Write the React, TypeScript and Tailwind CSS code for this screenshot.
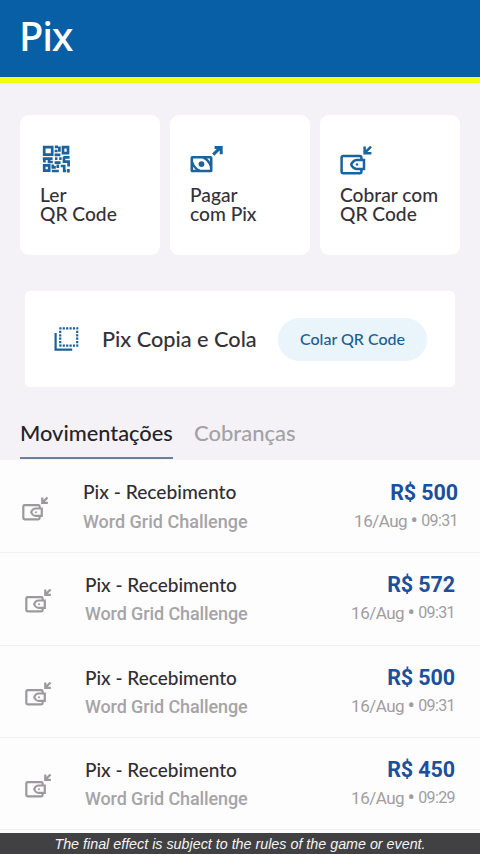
import clsx from "clsx";

type Movement = {
  id: number;
  amount: string;
  date: string;
  time: string;
};

const movements: Movement[] = [
  { id: 1, amount: "R$ 500", date: "16/Aug", time: "09:31" },
  { id: 2, amount: "R$ 572", date: "16/Aug", time: "09:31" },
  { id: 3, amount: "R$ 500", date: "16/Aug", time: "09:31" },
  { id: 4, amount: "R$ 450", date: "16/Aug", time: "09:29" },
];

function QrIcon() {
  return (
    <svg width="28" height="28" viewBox="0 0 28 28" fill="none" stroke="#1a639d" strokeWidth="2.7">
      <path d="M2.2 2.2h8v7.4h-8zM21 2.2h5v6h-5zM2.2 20.4h5v5.2h-5z" />
      <path d="M12.8 1.8h3.2M17.4 1.4v5.4M12.6 6h3M12.6 9.8h5.8M.8 13.6h9.8M2.4 13v4.4M7 13v4h3.8M13 13.6h2.4M17.2 13.6h2.4M12.6 17.6h6M21.4 12.4h6.2M22 12v4.6h4.6v5M10.8 19.4v3h3M9.8 26h7M15.8 19.6v3.4M18.8 21h3.4v5h2M26.4 24v3.6" />
    </svg>
  );
}

function PayIcon() {
  return (
    <svg width="34" height="28" viewBox="0 0 34 28" fill="none" stroke="#1a639d" strokeWidth="2.6">
      <rect x="1.8" y="12.2" width="19.4" height="13.8" rx="0.6" />
      <path d="M2.2 17.4c1.4 4 3.8 6.8 7.4 8.4M13.4 12.6c3.6 1.6 6 4.4 7.4 8.4" strokeWidth="2.4" />
      <circle cx="11.5" cy="19.1" r="2.9" fill="#1a639d" stroke="none" />
      <path d="M23.2 9.6 30.6 2.4M24.6 2.6h6.6v6.6" strokeWidth="3" />
    </svg>
  );
}

function WalletIcon({ className, color, weight }: { className: string; color: string; weight: number }) {
  return (
    <svg className={className} viewBox="0 0 34 30" fill="none" stroke={color} strokeWidth={weight}>
      <path d="M21.4 15.2v-2.6a1.6 1.6 0 0 0-1.6-1.6H3.2a1.6 1.6 0 0 0-1.6 1.6v14a1.6 1.6 0 0 0 1.6 1.6h16.6a1.6 1.6 0 0 0 1.6-1.6V24" />
      <path d="M24 15h-7.4c-2.2 0-4.8 2.4-5.4 4.5.6 2.1 3.2 4.5 5.4 4.5H24z" />
      <circle cx="17" cy="19.5" r="1.2" fill={color} stroke="none" />
      <path d="M31 1.6 25 7.6M24.6 1.6v6.6h6.8" />
    </svg>
  );
}

function CopyIcon() {
  return (
    <svg width="26" height="26" viewBox="0 0 26 26" fill="none" stroke="#1a6397" strokeWidth="2.2">
      <path d="M1.6 7v16.6h16.6" />
      <path d="M5.3 2.4h19M5.3 19.6h19" strokeDasharray="2.2 1.2" />
      <path d="M6.2 4.8v14M23.2 4.8v14" strokeDasharray="2.2 1.2" />
    </svg>
  );
}

function ActionCard({ icon, children }: { icon: React.ReactNode; children: React.ReactNode }) {
  return (
    <div className="h-[140px] flex-1 rounded-[9px] bg-white pl-5 pt-[30px]">
      <div className="h-[41px]">{icon}</div>
      <p className="text-[19.2px] leading-[18.5px] whitespace-nowrap text-[#343238]">{children}</p>
    </div>
  );
}

function MovementRow({ movement, first }: { movement: Movement; first: boolean }) {
  return (
    <li
      className={clsx(
        "flex items-start border-b border-[#f1eff3]",
        first ? "h-[93.3px] pt-5 pl-[22px] pr-[22px]" : "h-[92.4px] pt-[19px] pl-[25px] pr-[25px]",
      )}
    >
      <WalletIcon className="mt-[16px] h-[25px] w-[28px] shrink-0" color="#9b999c" weight={2.7} />
      <div className={clsx("flex-1 whitespace-nowrap", first ? "pl-[33px]" : "pl-8")}>
        <p
          className={clsx(
            "leading-[26px] text-[#302e33]",
            first ? "-mt-px text-[19.2px]" : "text-[19px]",
          )}
        >
          Pix - Recebimento
        </p>
        <p
          className={clsx(
            "font-['Roboto'] text-[18px] leading-[26px] font-medium text-[#a5a4a7]",
            first ? "mt-1" : "mt-[3px] tracking-[-0.1px]",
          )}
        >
          Word Grid Challenge
        </p>
      </div>
      <div className="text-right whitespace-nowrap">
        <p className="font-['Roboto'] text-[21.5px] leading-[26px] font-bold tracking-[-0.1px] text-[#1a509c]">
          {movement.amount}
        </p>
        <p className="mt-[2px] flex items-center justify-end font-['Roboto'] text-[16px] leading-[26px] font-normal text-[#a09da1]">
          <span className="text-[17px] tracking-[-0.5px]">{movement.date}</span>
          <span className="w-[14px] text-center text-[22px]">•</span>
          <span className="tracking-[-0.6px]">{movement.time}</span>
        </p>
      </div>
    </li>
  );
}

export default function App() {
  return (
    <main className="flex h-[854px] w-[480px] flex-col overflow-hidden bg-[#f4f2f6] font-['Lato',sans-serif] font-medium">
      <header className="h-[83px] shrink-0 border-b-[6px] border-[#eeff12] bg-[#085fa6] pl-[19px] pt-[9px]">
        <h1 className="font-['Noto_Sans'] text-[40px] leading-[54px] font-medium tracking-[-1.2px] text-white">Pix</h1>
      </header>

      <section className="mt-8 flex shrink-0 gap-[10px] px-5">
        <ActionCard icon={<div className="pl-[2px]"><QrIcon /></div>}>
          Ler
          <br />
          QR Code
        </ActionCard>
        <ActionCard icon={<PayIcon />}>
          Pagar
          <br />
          com Pix
        </ActionCard>
        <ActionCard icon={<WalletIcon className="h-[30px] w-[34px]" color="#1a639d" weight={2.5} />}>
          Cobrar com
          <br />
          QR Code
        </ActionCard>
      </section>

      <section className="mx-[25px] mt-[36px] flex h-[96px] shrink-0 items-center rounded-[5px] bg-white pl-[29px]">
        <CopyIcon />
        <p className="flex-1 pl-[22px] text-[21.7px] whitespace-nowrap text-[#343238]">Pix Copia e Cola</p>
        <button className="mr-[28px] h-[43px] w-[149px] rounded-full bg-[#eaf4fb] text-[16px] whitespace-nowrap text-[#1b5f92]">
          Colar QR Code
        </button>
      </section>

      <nav className="mt-[33px] flex h-[40px] shrink-0 items-start gap-[21px] pl-5">
        <button className="h-[39px] w-[153px] border-b-2 border-[#64829f] pb-3 text-left text-[21.8px] leading-6 whitespace-nowrap text-[#252328]">
          Movimentações
        </button>
        <button className="mt-px text-[22px] leading-6 text-[#a3a1a5]">Cobranças</button>
      </nav>

      <ul className="min-h-0 flex-1 overflow-hidden bg-[#fefdfe]">
        {movements.map((movement, i) => (
          <MovementRow key={movement.id} movement={movement} first={i === 0} />
        ))}
      </ul>

      <footer className="h-[21px] shrink-0 bg-[#414042] text-center font-['Liberation_Sans'] text-[14.3px] leading-[23px] font-normal whitespace-nowrap text-[#f4f4f4] italic">
        The final effect is subject to the rules of the game or event.
      </footer>
    </main>
  );
}
